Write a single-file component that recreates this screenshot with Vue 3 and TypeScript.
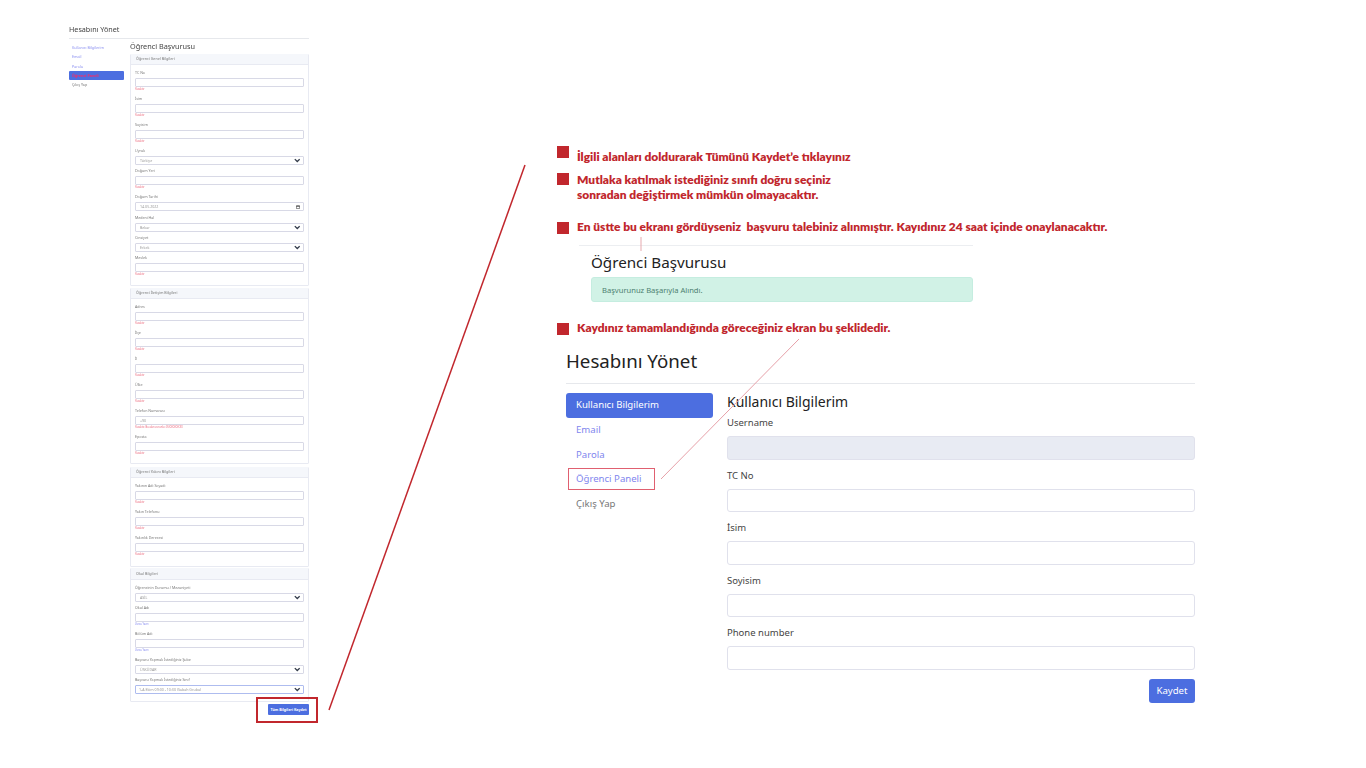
<script setup lang="ts">
type Kind = 'input' | 'select' | 'date'
interface Field { label: string; kind: Kind; value?: string; note?: string; hint?: boolean; focus?: boolean }
interface Card { title: string; fields: Field[] }

const req = 'Yasaktır'
const cards: Card[] = [
  { title: 'Öğrenci Genel Bilgileri', fields: [
    { label: 'TC No', kind: 'input', note: req },
    { label: 'İsim', kind: 'input', note: req },
    { label: 'Soyisim', kind: 'input', note: req },
    { label: 'Uyruk', kind: 'select', value: 'Türkiye' },
    { label: 'Doğum Yeri', kind: 'input', note: req },
    { label: 'Doğum Tarihi', kind: 'date', value: '14.05.2022' },
    { label: 'Medeni Hal', kind: 'select', value: 'Bekar' },
    { label: 'Cinsiyet', kind: 'select', value: 'Erkek' },
    { label: 'Meslek', kind: 'input', note: req },
  ] },
  { title: 'Öğrenci İletişim Bilgileri', fields: [
    { label: 'Adres', kind: 'input', note: req },
    { label: 'İlçe', kind: 'input', note: req },
    { label: 'İl', kind: 'input', note: req },
    { label: 'Ülke', kind: 'input', note: req },
    { label: 'Telefon Numarası', kind: 'input', value: '+90', note: 'Yasaktır. Bu alan zorunlu: 05XXXXXXXXX' },
    { label: 'Eposta', kind: 'input', note: req },
  ] },
  { title: 'Öğrenci Yakını Bilgileri', fields: [
    { label: 'Yakının Adı Soyadı', kind: 'input', note: req },
    { label: 'Yakın Telefonu', kind: 'input', note: req },
    { label: 'Yakınlık Derecesi', kind: 'input', note: req },
  ] },
  { title: 'Okul Bilgileri', fields: [
    { label: 'Öğrencinin Durumu / Mezuniyeti', kind: 'select', value: 'ASİL' },
    { label: 'Okul Adı', kind: 'input', note: 'Varsa Yazın', hint: true },
    { label: 'Bölüm Adı', kind: 'input', note: 'Varsa Yazın', hint: true },
    { label: 'Başvuru Yapmak İstediğiniz Şube', kind: 'select', value: 'ÜSKÜDAR' },
    { label: 'Başvuru Yapmak İstediğiniz Sınıf', kind: 'select', value: '1-A Ekim 09:00 - 10:30 (Sabah Grubu)', focus: true },
  ] },
]
const miniNav = ['Kullanıcı Bilgilerim', 'Email', 'Parola']
const bigFields = ['TC No', 'İsim', 'Soyisim', 'Phone number']
</script>

<template>
  <main class="canvas">
    <section class="mini">
      <h2 class="mini-title">Hesabını Yönet</h2>
      <div class="mini-body">
        <nav class="mini-nav">
          <a v-for="n in miniNav" :key="n" class="mini-link">{{ n }}</a>
          <a class="mini-link mini-active">Öğrenci Paneli</a>
          <a class="mini-link mini-muted">Çıkış Yap</a>
        </nav>
        <div class="mini-content">
          <h3 class="mini-heading">Öğrenci Başvurusu</h3>
          <div v-for="c in cards" :key="c.title" class="card">
            <div class="card-head">{{ c.title }}</div>
            <div class="card-body">
              <div v-for="f in c.fields" :key="f.label" class="fld" :class="'fld-' + f.kind">
                <div class="fld-label">{{ f.label }}</div>
                <div class="fld-box" :class="{ 'fld-focus': f.focus }">
                  <span>{{ f.value }}</span>
                  <svg v-if="f.kind === 'select'" class="chev" viewBox="0 0 12 8"><path d="M1.5 1.5 6 6l4.5-4.5" fill="none" stroke="#333b4a" stroke-width="2.4" /></svg>
                  <svg v-if="f.kind === 'date'" class="cal" viewBox="0 0 10 10"><path d="M1 2h8v7H1z" fill="none" stroke="#333" stroke-width="1.4" /><path d="M1 3h8" stroke="#333" stroke-width="2" /></svg>
                </div>
                <div v-if="f.note" class="fld-note" :class="{ 'fld-hint': f.hint }">{{ f.note }}</div>
              </div>
            </div>
          </div>
          <div class="mini-actions"><button class="mini-btn">Tüm Bilgileri Kaydet</button></div>
        </div>
      </div>
    </section>

    <div class="red-box"></div>
    <svg class="overlay" viewBox="0 0 1366 768">
      <line x1="329" y1="710" x2="525" y2="165" stroke="#c1272d" stroke-width="1.5" />
      <line x1="641" y1="237" x2="641" y2="251" stroke="#e6a9ae" stroke-width="1" />
      <line x1="799" y1="339" x2="661" y2="479" stroke="#e6a0a8" stroke-width="1" />
    </svg>

    <div class="guide">
      <div class="note note-1"><i class="sq"></i><p class="note-off">İlgili alanları doldurarak Tümünü Kaydet’e tıklayınız</p></div>
      <div class="note note-2"><i class="sq"></i><p>Mutlaka katılmak istediğiniz sınıfı doğru seçiniz<br />sonradan değiştirmek mümkün olmayacaktır.</p></div>
      <div class="note note-3"><i class="sq"></i><p>En üstte bu ekranı gördüyseniz&nbsp; başvuru talebiniz alınmıştır. Kayıdınız 24 saat içinde onaylanacaktır.</p></div>

      <section class="success">
        <h3 class="success-title">Öğrenci Başvurusu</h3>
        <div class="alert">Başvurunuz Başarıyla Alındı.</div>
      </section>

      <div class="note note-4"><i class="sq"></i><p>Kaydınız tamamlandığında göreceğiniz ekran bu şeklidedir.</p></div>

      <section class="account">
        <h2 class="acc-title">Hesabını Yönet</h2>
        <div class="acc-body">
          <nav class="acc-nav">
            <a class="acc-link acc-active">Kullanıcı Bilgilerim</a>
            <a class="acc-link">Email</a>
            <a class="acc-link">Parola</a>
            <a class="acc-link acc-marked">Öğrenci Paneli</a>
            <a class="acc-link acc-muted">Çıkış Yap</a>
          </nav>
          <div class="acc-form">
            <h3 class="acc-heading">Kullanıcı Bilgilerim</h3>
            <div class="acc-group">
              <label class="acc-label">Username</label>
              <div class="acc-input acc-disabled"></div>
            </div>
            <div v-for="b in bigFields" :key="b" class="acc-group">
              <label class="acc-label">{{ b }}</label>
              <div class="acc-input"></div>
            </div>
            <div class="acc-actions"><button class="acc-btn">Kaydet</button></div>
          </div>
        </div>
      </section>
    </div>
  </main>
</template>

<style>
html, body { margin: 0; background: #fff; }
</style>

<style scoped>
.canvas { position: relative; width: 1366px; height: 768px; overflow: hidden; background: #fff; font-family: "Noto Sans", "Open Sans", sans-serif; }
h2, h3, p { margin: 0; font-weight: 400; }
a { display: block; }

.mini { position: absolute; left: 69px; top: 24px; width: 240px; filter: blur(0.4px); }
.mini-title { font-size: 7.2px; line-height: 10px; color: #444; padding-bottom: 4px; border-bottom: 1px solid #e6e8ec; }
.mini-body { display: flex; gap: 6px; }
.mini-nav { width: 55px; padding-top: 4px; font-size: 3.7px; }
.mini-link { height: 9.4px; line-height: 9.4px; padding-left: 3px; color: #8a8ff0; border-radius: 1px; }
.mini-active { background: #4c6ee0; color: #ef2f6b; font-weight: 700; height: 9px; line-height: 9px; }
.mini-muted { color: #777; }
.mini-content { width: 179px; }
.mini-heading { font-size: 7.3px; height: 15px; line-height: 15px; color: #444; }
.card { border: 1px solid #e8eaf2; border-radius: 1px; margin-bottom: 3px; box-sizing: border-box; }
.card-head { height: 10px; line-height: 10px; padding-left: 5px; background: #f5f7fb; border-bottom: 1px solid #e8eaf2; font-size: 3.7px; color: #777; margin-top: -1px; }
.card-body { padding: 5px 4px 3px; }
.card:nth-of-type(1) .card-body { padding-bottom: 4px; }
.card:nth-of-type(1) { margin-bottom: 2px; }
.card:nth-of-type(3) .card-body { padding-bottom: 5px; }
.card:nth-of-type(3) { margin-bottom: 1px; }
.card:nth-of-type(4) .card-head { height: 11px; line-height: 11px; }
.card:nth-of-type(4) .card-body { padding-bottom: 4px; }
.fld { height: 26px; font-size: 3.6px; }
.fld-select { height: 20px; }
.fld-date { height: 21px; }
.fld-label { height: 5px; line-height: 5px; margin-bottom: 3px; color: #777; }
.fld-box { display: flex; align-items: center; justify-content: space-between; box-sizing: border-box; height: 9px; padding: 0 3px 0 4px; border: 1px solid #d8d9e6; border-radius: 1px; color: #999; }
.fld-focus { border-color: #aebcef; padding-left: 3px; }
.fld-note { height: 5px; line-height: 5px; color: #ec6a7e; font-size: 2.6px; }
.fld-hint { color: #8a8ff0; }
.chev { width: 6.5px; height: 5px; }
.cal { width: 4px; height: 4px; }
.mini-actions { display: flex; justify-content: flex-end; margin-top: -1px; }
.mini-btn { width: 41px; height: 11px; padding: 0; background: #4c6ee0; border: 0; border-radius: 1px; color: #fff; font: 700 3.6px "Noto Sans", sans-serif; }

.red-box { position: absolute; left: 256px; top: 697px; width: 62px; height: 26px; box-sizing: border-box; border: 2px solid #c1272d; }
.overlay { position: absolute; inset: 0; width: 1366px; height: 768px; pointer-events: none; z-index: 2; }

.guide { position: absolute; left: 557px; top: 146px; width: 640px; }
.note { display: flex; gap: 8px; color: #c1272d; font: 800 11.95px/15px Lato, "Open Sans", sans-serif; }
.note p { font-weight: 800; white-space: nowrap; }
.sq { flex: none; width: 12px; height: 12px; background: #c1272d; }
.note-off { padding-top: 3px; }
.note-2 { margin-top: 9px; }
.note-2 p { margin-top: -1px; }
.note-3 { margin-top: 20px; }
.note-3 p { margin-top: -3px; }
.success { margin: 11px 0 0 22px; width: 394px; border-top: 1px solid #eceef1; padding: 1px 0 0 12px; box-sizing: border-box; }
.success-title { font-size: 15.2px; line-height: 30px; color: #222; }
.alert { box-sizing: border-box; height: 25px; padding-left: 10px; line-height: 24px; background: #d1f2e6; border: 1px solid #c5ede0; border-radius: 3px; font-size: 7.6px; color: #4d7f70; }
.note-4 { margin-top: 21px; }
.note-4 p { margin-top: -3px; }

.account { width: 629px; margin: 13px 0 0 9px; }
.acc-title { font-size: 18.7px; line-height: 26px; color: #222; padding-bottom: 9px; border-bottom: 1px solid #e6e8ec; }
.acc-body { display: flex; gap: 14px; padding-top: 9px; }
.acc-nav { width: 147px; flex: none; font-size: 9.6px; }
.acc-link { position: relative; height: 24.6px; line-height: 24.6px; padding-left: 10px; color: #7f86ee; border-radius: 3px; }
.acc-active { background: #4c6ee0; color: #fff; height: 25px; }
.acc-muted { color: #777; }
.acc-marked::after { content: ""; position: absolute; left: 2px; top: 1px; width: 87px; height: 22px; box-sizing: border-box; border: 1px solid #e06070; }
.acc-form { flex: 1; }
.acc-heading { font-size: 14px; line-height: 18px; color: #222; }
.acc-label { display: block; font-size: 9.5px; line-height: 14px; color: #444; margin-bottom: 6px; }
.acc-group { height: 52.6px; }
.acc-heading + .acc-group { margin-top: 5px; }
.acc-input { box-sizing: border-box; height: 23.5px; border: 1px solid #e0e1ec; border-radius: 3px; background: #fff; }
.acc-disabled { background: #e8ebf3; }
.acc-actions { display: flex; justify-content: flex-end; }
.acc-btn { width: 46px; height: 24px; padding: 0; border: 0; border-radius: 3px; background: #4c6ee0; color: #fff; font: 9.6px "Noto Sans", sans-serif; }
</style>
